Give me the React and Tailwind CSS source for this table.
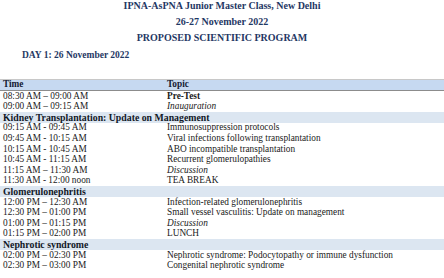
import React from "react";

const rows = [
  { t: "08:30 AM – 09:00 AM", p: "Pre-Test", b: true },
  { t: "09:00 AM – 09:15 AM", p: "Inauguration", i: true },
  { s: "Kidney Transplantation: Update on Management" },
  { t: "09:15 AM - 09:45 AM", p: "Immunosuppression protocols" },
  { t: "09:45 AM - 10:15 AM", p: "Viral infections following transplantation" },
  { t: "10:15 AM - 10:45 AM", p: "ABO incompatible transplantation" },
  { t: "10:45 AM - 11:15 AM", p: "Recurrent glomerulopathies" },
  { t: "11:15 AM – 11:30 AM", p: "Discussion", i: true },
  { t: "11:30 AM - 12:00 noon", p: "TEA BREAK" },
  { s: "Glomerulonephritis" },
  { t: "12:00 PM – 12:30 AM", p: "Infection-related glomerulonephritis" },
  { t: "12:30 PM – 01:00 PM", p: "Small vessel vasculitis: Update on management" },
  { t: "01:00 PM – 01:15 PM", p: "Discussion", i: true },
  { t: "01:15 PM – 02:00 PM", p: "LUNCH" },
  { s: "Nephrotic syndrome" },
  { t: "02:00 PM – 02:30 PM", p: "Nephrotic syndrome: Podocytopathy or immune dysfunction" },
  { t: "02:30 PM – 03:00 PM", p: "Congenital nephrotic syndrome" },
];

export default function App() {
  return (
    <div
      className="w-[444px] h-[278px] overflow-hidden bg-white text-[#1a1a1a]"
      style={{ fontFamily: '"Liberation Serif", "Times New Roman", serif' }}
    >
      <div className="text-[#1f3864] font-bold text-[10px] text-center">
        <div className="h-[12px] leading-[12px]">IPNA-AsPNA Junior Master Class, New Delhi</div>
        <div className="mt-[2px] h-[16px] leading-[16px]">26-27 November 2022</div>
        <div className="h-[16px] leading-[16px]">PROPOSED SCIENTIFIC PROGRAM</div>
      </div>
      <div className="mt-[1px] h-[16px] leading-[16px] pl-[22px] text-[9.5px] font-bold text-[#1f3864]">
        DAY 1: 26 November 2022
      </div>
      <div className="mt-[16px] border-t border-[#c8c8c8]">
        <div className="flex h-[11px] items-center bg-[#c6d9f1] border-b border-[#8c8c8c] text-[9.3px] font-bold text-[#141a33] leading-none">
          <div className="w-[167px] pl-[3px]">Time</div>
          <div>Topic</div>
        </div>
        {rows.map((r, k) =>
          r.s ? (
            <div
              key={k}
              className="flex h-[10.6px] items-center bg-[#dce6f1] pl-[3px] text-[9.8px] font-bold leading-none text-[#111827] whitespace-nowrap"
            >
              {r.s}
            </div>
          ) : (
            <div key={k} className="flex h-[10.6px] items-center text-[9.3px] leading-none">
              <div className="w-[167px] pl-[3px] whitespace-nowrap">{r.t}</div>
              <div className={`whitespace-nowrap ${r.b ? "font-bold" : ""} ${r.i ? "italic" : ""}`}>{r.p}</div>
            </div>
          )
        )}
      </div>
    </div>
  );
}
